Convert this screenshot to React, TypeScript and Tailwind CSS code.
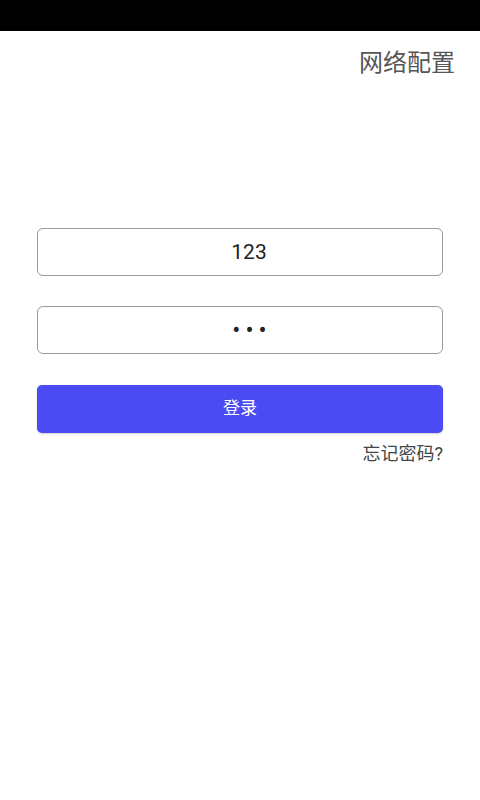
import React from "react";

const font = { fontFamily: '"Roboto", "Noto Sans CJK SC", sans-serif' };

export default function App() {
    return (
        <div className="w-[480px] h-[800px] bg-white flex flex-col" style={font}>
            {/* status bar */}
            <div className="h-[31px] bg-black" />

            {/* header */}
            <div className="flex justify-end pr-[25px] pt-[18px]">
                <span className="text-[24px] leading-[28px] text-[#555]">网络配置</span>
            </div>

            {/* form */}
            <div className="flex flex-col px-[37px] mt-[151px]">
                <input
                    readOnly
                    value="123"
                    className="h-[48px] w-full rounded-[6px] border border-[#9a9a9a] pl-[18px] text-center text-[21px] text-[#222] outline-none"
                />
                <input
                    readOnly
                    type="password"
                    value="123"
                    className="mt-[30px] h-[48px] w-full rounded-[6px] border border-[#9a9a9a] pl-[24px] text-center text-[24px] text-[#222] tracking-[5px] outline-none"
                />
                <button className="mt-[31px] h-[48px] w-full rounded-[5px] bg-[#4b4bf4] text-white text-[17px] shadow-[0_1px_2px_rgba(0,0,0,0.2)]">
                    登录
                </button>
                <div className="flex justify-end mt-[9px]">
                    <span className="text-[18px] leading-[24px] text-[#444]">忘记密码?</span>
                </div>
            </div>
        </div>
    );
}
